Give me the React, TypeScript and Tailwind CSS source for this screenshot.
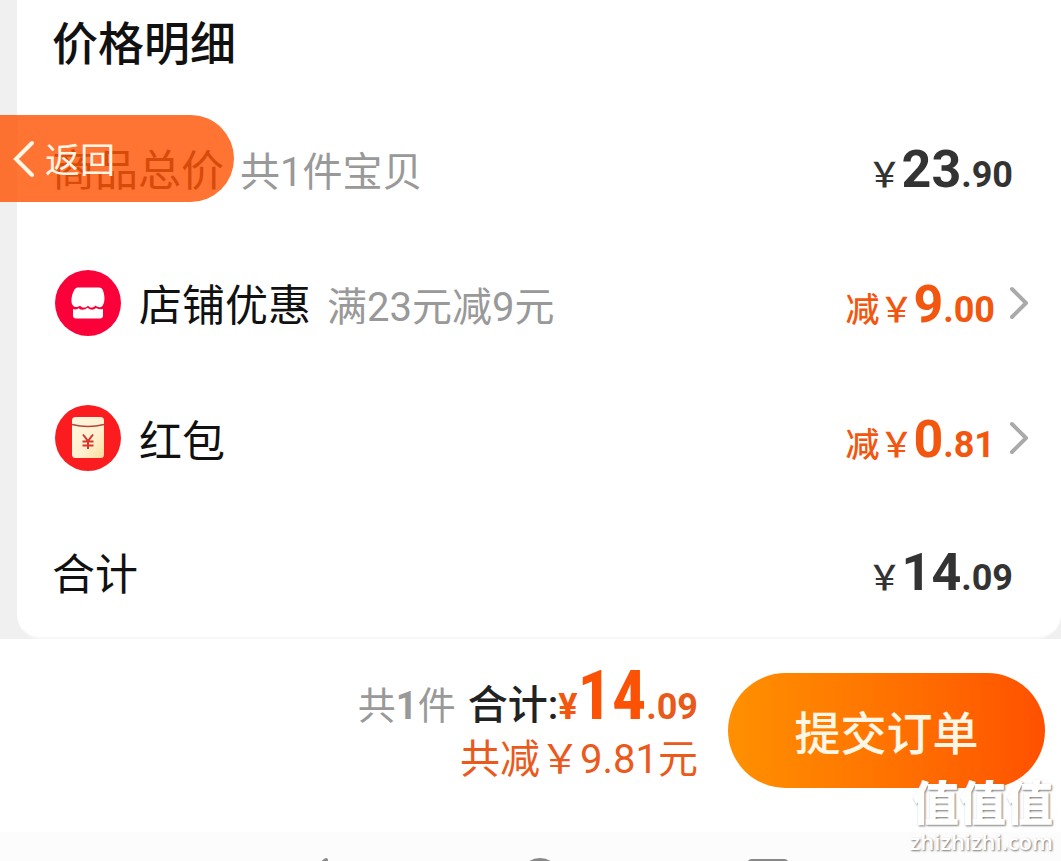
import { ChevronRight } from "lucide-react";

const rows = [
  { id: "shop", label: "店铺优惠", note: "满23元减9元", whole: "9", cents: ".00" },
  { id: "packet", label: "红包", note: "", whole: "0", cents: ".81" },
];

function ShopIcon() {
  return (
    <svg viewBox="0 0 66 66" className="ml-[3px] size-[66px] shrink-0" aria-hidden="true">
      <circle cx="33" cy="33" r="33" fill="#fb0139" />
      <path
        d="M22 17.500h22q3 0 4 3c1.500 4 1.800 8 1.200 11-.8 3.500-2 5-3.200 5.500-2 .5-4 0-5.500-1.500-2.500 2.700-5 2.700-7.500.2-2.500 2.500-5.500 2.500-8 0-2 1.500-4 1.800-6 .8-1.500-1-2.500-3-2.500-5-.3-3 .5-6.500 2-10q1-3 3.500-4z"
        fill="#fff"
      />
      <path
        d="M18 39c2 .8 3.500.5 5.500-.8 3 2.300 6 2 9-.4 3 2.500 6 2.500 8.500.2 2.500 1.300 4.500 1.600 7 1v6.500q0 3-3 3H21q-3 0-3-3z"
        fill="#fff"
      />
    </svg>
  );
}

function PacketIcon() {
  return (
    <svg viewBox="0 0 66 66" className="ml-[3px] size-[66px] shrink-0" aria-hidden="true">
      <defs>
        <linearGradient id="packet-fill" x1="0" y1="0" x2="1" y2="1">
          <stop offset="0" stopColor="#fff6df" />
          <stop offset="0.6" stopColor="#fff0cf" />
          <stop offset="1" stopColor="#f8dc9c" />
        </linearGradient>
      </defs>
      <circle cx="33" cy="33" r="33" fill="#fb1c1f" />
      <rect x="17" y="12" width="32" height="41" rx="3.500" fill="url(#packet-fill)" />
      <path d="M17 19.500q16 4 32 0" fill="none" stroke="#b5453c" strokeWidth="1.500" />
      <path d="M28 29.500l5 6.500 5-6.500M33 36v8M27.500 36.500h11M27.500 40.500h11" fill="none" stroke="#d8352b" strokeWidth="2" />
    </svg>
  );
}

function Price({ whole, cents }: { whole: string; cents: string }) {
  return (
    <>
      <span className="text-[34px] font-medium">￥</span>
      <span className="text-[52px] font-bold">{whole}</span>
      <span className="text-[36px] font-bold">{cents}</span>
    </>
  );
}

export default function App() {
  return (
    <div className="relative min-h-screen overflow-hidden bg-white font-[Roboto,'Noto_Sans_CJK_SC',sans-serif] text-[#111] whitespace-nowrap" lang="zh-CN">
      <main className="bg-[#f0f0f0] pl-[17px]">
        <section className="rounded-b-3xl border-b-2 border-[#f7f7f7] bg-white pr-12 pl-[35px]">
          <h1 className="flex h-[100px] items-start pt-3 text-[46px] leading-[64px] font-medium">价格明细</h1>

          <div className="flex h-[135px] items-center justify-between leading-[60px]">
            <p className="flex items-baseline gap-4 pt-2">
              <span className="text-[43px] text-[#333]">商品总价</span>
              <span className="text-[40px] text-[#999]">共1件宝贝</span>
            </p>
            <p className="pt-4 text-[#333]">
              <Price whole="23" cents=".90" />
            </p>
          </div>

          {rows.map((row) => (
            <div key={row.id} className="-mr-[34px] flex h-[135px] items-center leading-[60px]">
              {row.id === "shop" ? <ShopIcon /> : <PacketIcon />}
              <p className="ml-[18px] flex items-baseline gap-4 pt-2">
                <span className="text-[43px]">{row.label}</span>
                <span className="text-[40px] text-[#999]">{row.note}</span>
              </p>
              <button type="button" className="ml-auto flex items-center text-[#f2560f]">
                <span className="-mr-1 pt-4">
                  <span className="text-[34px] font-medium">减</span>
                  <Price whole={row.whole} cents={row.cents} />
                </span>
                <ChevronRight className="size-14 text-[#aaa]" strokeWidth={1.7} />
              </button>
            </div>
          ))}

          <div className="flex h-[132px] items-center justify-between leading-[60px]">
            <p className="pt-2 text-[43px]">合计</p>
            <p className="pt-4 text-[#333]">
              <Price whole="14" cents=".09" />
            </p>
          </div>
        </section>
      </main>

      <section className="flex h-[193px] items-start justify-end gap-[30px] pt-[34px] pr-4">
        <div className="text-right">
          <p className="flex h-[60px] items-baseline justify-end leading-[46px]">
            <span className="text-[38px] text-[#999]">
              共<b>1</b>件
            </span>
            <span className="ml-3 text-[40px] font-medium text-[#222]">合计:</span>
            <span className="text-[36px] font-bold text-[#f2560f]">¥</span>
            <span className="font-['Roboto_Condensed',Roboto] text-[68px] font-bold text-[#fc5206]">14</span>
            <span className="text-[36px] font-bold text-[#e8591a]">.09</span>
          </p>
          <p className="text-[40px] leading-[54px] text-[#ea5a1c]">共减￥9.81元</p>
        </div>
        <button
          type="button"
          className="h-[115px] w-[317px] rounded-full bg-linear-to-r from-[#ff9000] to-[#ff5000] pt-2 text-[46px] font-medium text-[#fff6e6]"
        >
          提交订单
        </button>
      </section>

      <footer className="h-[29px] overflow-hidden bg-[#fcfcfc]">
        <svg className="h-[60px] w-full" viewBox="0 0 1061 60" fill="none" stroke="#888" strokeWidth="4" aria-hidden="true">
          <path d="M326 28L304 46l22 18z" strokeLinejoin="round" />
          <circle cx="540" cy="46" r="18" />
          <rect x="749" y="29" width="38" height="36" rx="3" />
        </svg>
      </footer>

      <a
        href="#back"
        className="absolute top-[115px] left-0 flex h-[87px] w-[234px] items-center gap-2.5 rounded-r-full bg-[#ff5000]/80 pl-3 text-[35px] text-[#fff6e6]"
      >
        <svg viewBox="0 0 23 38" className="h-[38px] w-[23px]" fill="none" stroke="currentColor" strokeWidth="4" strokeLinecap="round" aria-hidden="true">
          <path d="M20 3L4 19l16 16" />
        </svg>
        <span className="pt-2">返回</span>
      </a>

      <div className="absolute right-2 bottom-2 text-right text-white [text-shadow:1px_1px_2px_#777]">
        <p className="text-[47px] leading-[50px] font-black">值值值</p>
        <p className="font-['Open_Sans',sans-serif] text-[22px] leading-6 font-semibold">zhizhizhi.com</p>
      </div>
    </div>
  );
}
